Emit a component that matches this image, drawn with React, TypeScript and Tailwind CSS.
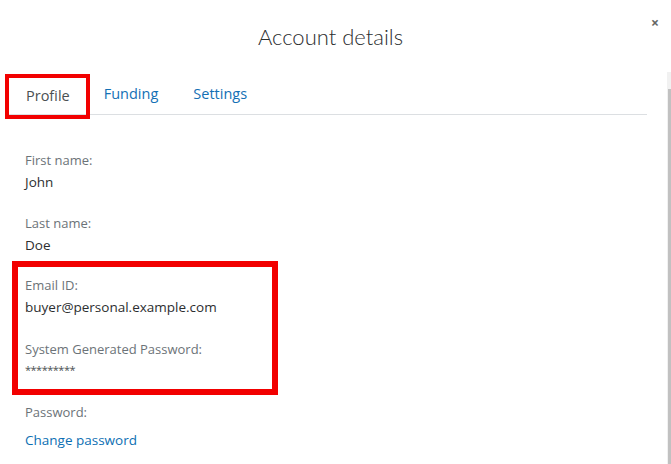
const font = { fontFamily: '"Open Sans", "Noto Sans", Arial, sans-serif' }

function Field(props: { label: string; value: string; link?: boolean; className?: string }) {
  return (
    <div className={props.className}>
      <p className="text-[13px] leading-[22px] text-[#6c7378]">{props.label}</p>
      <p className={props.link ? "mt-[6px] text-[13.5px] leading-[22px] text-[#0c6fb3]" : "text-[13.5px] leading-[22px] text-[#2c2e2f]"}>
        {props.value}
      </p>
    </div>
  )
}

export default function App() {
  return (
    <div className="relative w-[671px] h-[464px] bg-white overflow-hidden" style={font}>
      <div className="h-[72px] flex items-center justify-center pr-[10px]">
        <h1 className="font-['Lato',sans-serif] text-[22px] font-light text-[#2c2e2f]">Account details</h1>
      </div>
      <button className="absolute right-[12px] top-[16px] text-[14px] leading-none text-[#666] font-bold">×</button>

      <div className="flex h-[392px]">
        <div className="flex-1 flex flex-col">
          <div className="ml-[5px] mr-[20px] mt-[1px] flex items-center border-b border-[#dcdfe2] h-[42px]">
            <div className="relative z-10 -mb-[4px] mt-[1px] h-[45px] flex items-center border-4 border-[#f20000] pl-[17px] pr-[16px] text-[14.5px] text-[#4a4f52]">
              Profile
            </div>
            <div className="ml-[14px] text-[14.5px] text-[#1370b5]">Funding</div>
            <div className="ml-[35px] text-[14.5px] text-[#1370b5]">Settings</div>
          </div>

          <div className="flex flex-col pl-[25px] mt-[34px]">
            <Field label="First name:" value="John" />
            <Field label="Last name:" value="Doe" className="mt-[19px]" />
            <div className="-ml-[13px] mt-[5px] w-[266px] border-[6px] border-[#f20000] pl-[7px] pt-[7px] pb-[9px]">
              <Field label="Email ID:" value="buyer@personal.example.com" />
              <div className="mt-[20px]">
                <p className="text-[13px] leading-[22px] text-[#6c7378]">System Generated Password:</p>
                <p className="text-[11px] leading-[20px] text-[#4a4f52] tracking-[-0.5px]">*********</p>
              </div>
            </div>
            <Field label="Password:" value="Change password" link className="mt-[6px]" />
          </div>
        </div>

        <div className="w-[4px] flex flex-col bg-[#f1f1f1]">
          <div className="h-[17px]" />
          <div className="flex-1 ml-[1px] bg-[#c1c1c1]" />
        </div>
      </div>
    </div>
  )
}
